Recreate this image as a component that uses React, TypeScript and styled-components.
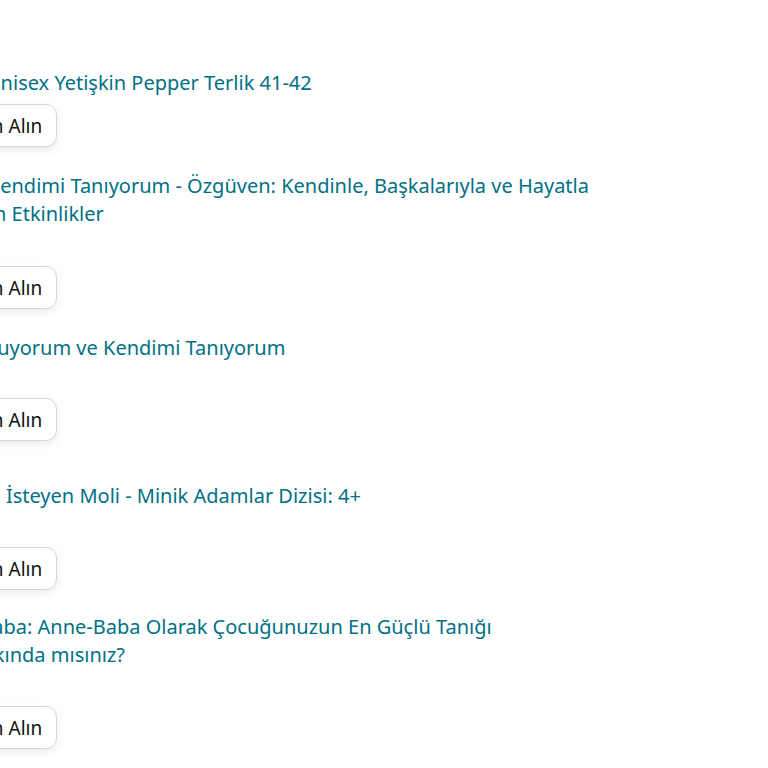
import styled, { createGlobalStyle } from 'styled-components';

const GlobalStyle = createGlobalStyle`
    html, body {
        margin: 0;
        padding: 0;
        background: #ffffff;
        overflow: hidden;
    }
    body {
        font-family: "Noto Sans", "Liberation Sans", Arial, sans-serif;
    }
`;

const Page = styled.div`
    width: 768px;
    height: 768px;
    overflow: hidden;
`;

const List = styled.div`
    display: flex;
    flex-direction: column;
    margin-left: -60px;
    padding-top: 69px;
    width: 664px;
`;

const Item = styled.div<{ $top: number }>`
    display: flex;
    flex-direction: column;
    margin-top: ${(p) => p.$top}px;
`;

const Product = styled.div`
    display: flex;
    align-items: flex-start;
`;

// product picture column, scrolled out of view on the left
const Thumb = styled.div<{ $w: number }>`
    flex: 0 0 ${(p) => p.$w}px;
    height: 28px;
    background: #ffffff;
`;

const Title = styled.a`
    flex: 1;
    font-size: 20px;
    line-height: 28px;
    color: #007185;
    text-decoration: none;
`;

const Actions = styled.div<{ $gap: number }>`
    display: flex;
    padding-left: 4px;
    margin-top: ${(p) => p.$gap}px;
`;

const BuyButton = styled.button`
    height: 43px;
    padding: 0 14px;
    border: 1px solid #d5d9d9;
    border-radius: 11px;
    background: #ffffff;
    box-shadow: 0 3px 7px rgba(213, 217, 217, 0.5);
    font-family: "Noto Sans", "Liberation Sans", Arial, sans-serif;
    font-size: 19px;
    color: #0f1111;
    white-space: nowrap;
    cursor: pointer;
`;

const items = [
    { title: 'Unisex Yetişkin Pepper Terlik 41-42', thumb: 46, top: 0, gap: 7 },
    { title: 'Ben Kendimi Tanıyorum - Özgüven: Kendinle, Başkalarıyla ve Hayatla Ev İçin Etkinlikler', thumb: 6, top: 25, gap: 38 },
    { title: 'Oynuyorum ve Kendimi Tanıyorum', thumb: 19, top: 25, gap: 36 },
    { title: 'İzin İsteyen Moli - Minik Adamlar Dizisi: 4+', thumb: 27, top: 41, gap: 37 },
    { title: '– Baba: Anne-Baba Olarak Çocuğunuzun En Güçlü Tanığı Farkında\u00a0mısınız?', thumb: 24, top: 23, gap: 37 },
];

export default function App() {
    return (
        <Page>
            <GlobalStyle />
            <List>
                {items.map((item) => (
                    <Item key={item.title} $top={item.top}>
                        <Product>
                            <Thumb $w={item.thumb} />
                            <Title href="#">{item.title}</Title>
                        </Product>
                        <Actions $gap={item.gap}>
                            <BuyButton>Satın Alın</BuyButton>
                        </Actions>
                    </Item>
                ))}
            </List>
        </Page>
    );
}
